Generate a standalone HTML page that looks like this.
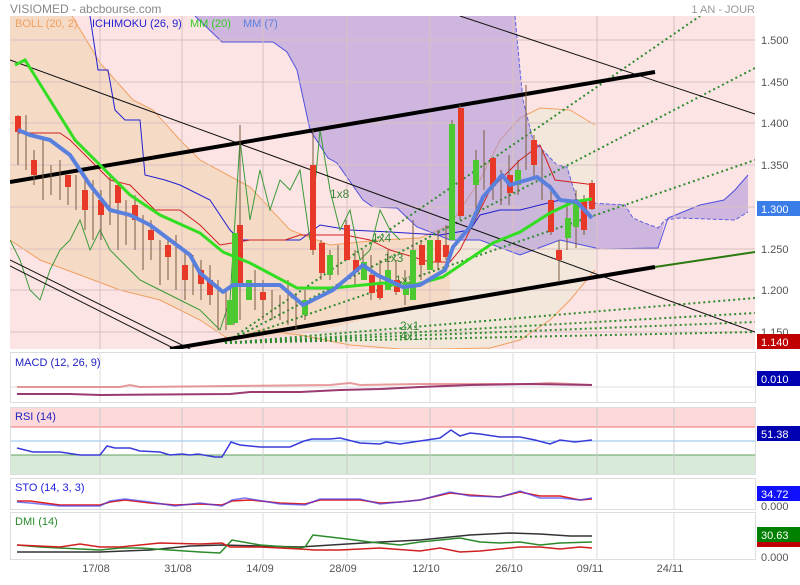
<!DOCTYPE html>
<html><head><meta charset="utf-8"><style>
body{margin:0;width:800px;height:580px;background:#fff;overflow:hidden;font-family:"Liberation Sans",sans-serif}
svg text{font-family:"Liberation Sans",sans-serif}
</style></head><body>
<svg width="800" height="580" xmlns="http://www.w3.org/2000/svg">
<defs><clipPath id="c"><rect x="10" y="16" width="745" height="333"/></clipPath></defs>
<text x="10" y="13" font-size="12" fill="#888">VISIOMED - abcbourse.com</text>
<text x="755" y="13" font-size="11" fill="#999" text-anchor="end">1 AN - JOUR</text>
<g clip-path="url(#c)">
<rect x="10" y="16" width="745" height="333" fill="#fde4e4"/>
<!-- bollinger -->
<polygon points="10,16 72,16 100,63 133,100 153,110 180,140 200,160 250,187 290,230 330,245 380,240 420,238 450,225 480,180 500,140 520,118 540,108 570,110 595,125 595,270 570,300 550,320 520,340 490,348 440,349 400,349 350,345 300,335 260,330 230,340 200,320 160,300 120,290 80,275 40,260 10,240" fill="#f3e7dc"/>
<polygon points="10,16 72,16 100,63 133,100 153,110 180,140 200,160 250,187 290,230 330,245 380,240 420,238 450,225 450,300 300,335 230,340 200,320 160,300 120,290 80,275 40,260 10,240" fill="#f7d2b8" opacity="0.6"/>
<polyline points="72,16 100,63 133,100 153,110 180,140 200,160 250,187 290,230 330,245 380,240 420,238 450,225 480,180 500,140 520,118 540,108 570,110 595,125" fill="none" stroke="#f0a060" stroke-width="1"/>
<polyline points="10,240 40,260 80,275 120,290 160,300 200,320 230,340 260,330 300,335 350,345 400,349 440,349 490,348 520,340 550,320 570,300 595,270" fill="none" stroke="#f0a060" stroke-width="1"/>
<!-- ichimoku cloud -->
<polygon points="195,16 515,16 520,70 523,100 533,140 557,165 567,167 577,200 592,203 625,205 633,218 642,222 658,228 668,218 700,205 724,200 735,190 748,175 748,212 735,220 680,218 665,220 658,248 600,249 560,240 520,255 480,240 450,240 433,233 417,227 397,208 373,207 363,200 337,163 328,158 310,130 297,70 287,52 273,42 222,42" fill="#a890d8" opacity="0.55"/>
<polyline points="195,16 222,42 273,42 287,52 297,70 310,130 328,158 337,163 363,200 373,207 397,208 417,227 433,233 450,240 480,240 520,255 560,240 600,249 658,248 668,218 700,205 724,200 735,190 748,175" fill="none" stroke="#5050e0" stroke-width="1"/>
<polyline points="515,16 520,70 523,100 533,140 557,165 567,167 577,200 592,203 625,205 633,218 642,222 658,228 665,220 680,218 735,220 748,212" fill="none" stroke="#6060e0" stroke-width="1" stroke-dasharray="4,2"/>
<!-- grid -->
<g stroke="#d9c0c0" stroke-width="1">
<line x1="100" y1="16" x2="100" y2="349"/><line x1="182" y1="16" x2="182" y2="349"/><line x1="263" y1="16" x2="263" y2="349"/><line x1="347" y1="16" x2="347" y2="349"/><line x1="430" y1="16" x2="430" y2="349"/><line x1="513" y1="16" x2="513" y2="349"/><line x1="597" y1="16" x2="597" y2="349"/><line x1="674" y1="16" x2="674" y2="349"/>
<line x1="10" y1="40" x2="755" y2="40"/><line x1="10" y1="82" x2="755" y2="82"/><line x1="10" y1="123" x2="755" y2="123"/><line x1="10" y1="165" x2="755" y2="165"/><line x1="10" y1="207" x2="755" y2="207"/><line x1="10" y1="249" x2="755" y2="249"/><line x1="10" y1="290" x2="755" y2="290"/><line x1="10" y1="332" x2="755" y2="332"/>
</g>
<!-- ichimoku tenkan / kijun -->
<polyline points="90,16 98,70 108,70 115,110 125,120 140,120 145,175 165,180 180,185 210,200 230,230 240,240 270,240 300,240 320,225 350,230 390,232 440,235 470,230 480,215 500,210 520,210 560,200 595,200" fill="none" stroke="#2020d0" stroke-width="1"/>
<polyline points="18,133 60,133 70,140 90,160 110,180 130,185 155,210 180,210 200,225 220,245 250,240 285,240 300,235 345,235 370,240 390,250 430,262 450,262 460,250 475,220 490,190 505,175 520,160 540,145 555,180 595,185" fill="none" stroke="#d02020" stroke-width="1"/>
<!-- chikou -->
<polyline points="10,240 20,260 30,290 40,300 50,270 60,250 70,240 80,220 90,250 100,230 110,250 120,260 140,280 160,290 180,300 200,310 220,330 230,300 240,140 250,220 260,170 270,210 280,180 290,190 300,170 310,240 320,130 330,190 340,230 350,210 360,260 370,250 380,210 390,230 400,240" fill="none" stroke="#3a9a3a" stroke-width="1"/>
<!-- fan lines -->
<g stroke="#2e8b2e" stroke-width="2" stroke-dasharray="2,3" fill="none">
<line x1="225" y1="343" x2="700" y2="16"/><line x1="225" y1="343" x2="755" y2="68"/><line x1="225" y1="343" x2="755" y2="160"/><line x1="225" y1="343" x2="755" y2="298"/><line x1="225" y1="343" x2="755" y2="313"/><line x1="225" y1="343" x2="755" y2="322"/><line x1="225" y1="343" x2="755" y2="332"/>
</g>
<g font-size="12" fill="#3a8a3a"><text x="330" y="198">1x8</text><text x="372" y="242">1x4</text><text x="384" y="262">1x3</text><text x="395" y="284">1x2</text><text x="400" y="330">2x1</text><text x="400" y="340">4x1</text></g>
<!-- black lines -->
<line x1="10" y1="60" x2="755" y2="332" stroke="#111" stroke-width="1"/>
<line x1="460" y1="16" x2="755" y2="114" stroke="#111" stroke-width="1"/>
<line x1="10" y1="260" x2="190" y2="349" stroke="#111" stroke-width="1"/>
<line x1="10" y1="266" x2="175" y2="349" stroke="#111" stroke-width="1"/>
<line x1="10" y1="182" x2="655" y2="72" stroke="#000" stroke-width="4"/>
<line x1="170" y1="349" x2="655" y2="267" stroke="#000" stroke-width="4"/>
<line x1="655" y1="267" x2="755" y2="252" stroke="#2a7a10" stroke-width="2"/>
<!-- candles -->
<g stroke="#7a5a40" stroke-width="1">
<line x1="18" y1="115" x2="18" y2="165"/><line x1="26" y1="115" x2="26" y2="170"/><line x1="34" y1="150" x2="34" y2="185"/><line x1="43" y1="140" x2="43" y2="200"/><line x1="51" y1="165" x2="51" y2="195"/><line x1="60" y1="160" x2="60" y2="200"/><line x1="68" y1="175" x2="68" y2="205"/><line x1="76" y1="175" x2="76" y2="210"/><line x1="85" y1="180" x2="85" y2="230"/><line x1="93" y1="180" x2="93" y2="240"/><line x1="101" y1="190" x2="101" y2="240"/><line x1="110" y1="175" x2="110" y2="225"/><line x1="118" y1="190" x2="118" y2="250"/><line x1="126" y1="200" x2="126" y2="245"/><line x1="135" y1="195" x2="135" y2="250"/><line x1="143" y1="215" x2="143" y2="270"/><line x1="151" y1="220" x2="151" y2="260"/><line x1="160" y1="240" x2="160" y2="285"/><line x1="168" y1="240" x2="168" y2="280"/><line x1="176" y1="235" x2="176" y2="290"/><line x1="185" y1="250" x2="185" y2="300"/><line x1="193" y1="255" x2="193" y2="295"/><line x1="201" y1="260" x2="201" y2="300"/><line x1="210" y1="265" x2="210" y2="305"/><line x1="218" y1="280" x2="218" y2="330"/><line x1="226" y1="290" x2="226" y2="330"/><line x1="234" y1="240" x2="234" y2="325"/><line x1="240" y1="125" x2="240" y2="320"/><line x1="255" y1="270" x2="255" y2="310"/><line x1="263" y1="280" x2="263" y2="320"/><line x1="272" y1="290" x2="272" y2="320"/><line x1="280" y1="295" x2="280" y2="320"/><line x1="288" y1="280" x2="288" y2="325"/><line x1="296" y1="295" x2="296" y2="330"/><line x1="305" y1="290" x2="305" y2="320"/><line x1="313" y1="130" x2="313" y2="255"/><line x1="321" y1="240" x2="321" y2="280"/><line x1="330" y1="250" x2="330" y2="280"/><line x1="338" y1="245" x2="338" y2="275"/><line x1="346" y1="220" x2="346" y2="260"/><line x1="355" y1="250" x2="355" y2="285"/><line x1="363" y1="250" x2="363" y2="280"/><line x1="371" y1="255" x2="371" y2="300"/><line x1="380" y1="260" x2="380" y2="300"/><line x1="388" y1="250" x2="388" y2="290"/><line x1="396" y1="260" x2="396" y2="295"/><line x1="405" y1="270" x2="405" y2="305"/><line x1="413" y1="220" x2="413" y2="300"/><line x1="421" y1="240" x2="421" y2="280"/><line x1="430" y1="240" x2="430" y2="270"/><line x1="438" y1="230" x2="438" y2="270"/><line x1="446" y1="225" x2="446" y2="260"/><line x1="452" y1="120" x2="452" y2="240"/><line x1="460" y1="105" x2="460" y2="220"/><line x1="476" y1="150" x2="476" y2="220"/><line x1="484" y1="130" x2="484" y2="190"/><line x1="493" y1="160" x2="493" y2="200"/><line x1="501" y1="170" x2="501" y2="205"/><line x1="509" y1="155" x2="509" y2="205"/><line x1="518" y1="160" x2="518" y2="195"/><line x1="526" y1="85" x2="526" y2="170"/><line x1="534" y1="135" x2="534" y2="180"/><line x1="542" y1="150" x2="542" y2="200"/><line x1="551" y1="185" x2="551" y2="235"/><line x1="559" y1="240" x2="559" y2="282"/><line x1="567" y1="200" x2="567" y2="250"/><line x1="576" y1="190" x2="576" y2="248"/><line x1="584" y1="195" x2="584" y2="235"/><line x1="592" y1="180" x2="592" y2="210"/>
</g>
<g fill="#e83828">
<rect x="15" y="116" width="6" height="16"/><rect x="31" y="160" width="6" height="15"/><rect x="65" y="175" width="6" height="12"/><rect x="82" y="190" width="6" height="20"/><rect x="98" y="200" width="6" height="15"/><rect x="115" y="185" width="6" height="18"/><rect x="132" y="205" width="6" height="15"/><rect x="148" y="230" width="6" height="10"/><rect x="165" y="245" width="6" height="12"/><rect x="182" y="265" width="6" height="15"/><rect x="198" y="270" width="6" height="14"/><rect x="207" y="280" width="6" height="15"/><rect x="237" y="225" width="6" height="60"/><rect x="260" y="292" width="6" height="8"/><rect x="310" y="165" width="6" height="85"/><rect x="319" y="243" width="6" height="30"/><rect x="344" y="225" width="6" height="35"/><rect x="353" y="260" width="6" height="12"/><rect x="369" y="275" width="6" height="18"/><rect x="377" y="285" width="6" height="13"/><rect x="394" y="280" width="6" height="12"/><rect x="419" y="245" width="6" height="20"/><rect x="435" y="240" width="6" height="22"/><rect x="443" y="245" width="6" height="12"/><rect x="458" y="108" width="6" height="108"/><rect x="490" y="158" width="6" height="28"/><rect x="507" y="175" width="6" height="18"/><rect x="531" y="140" width="6" height="25"/><rect x="548" y="200" width="6" height="32"/><rect x="556" y="250" width="6" height="10"/><rect x="581" y="200" width="6" height="30"/><rect x="589" y="183" width="6" height="26"/>
</g>
<g fill="#4cc830">
<rect x="227" y="300" width="6" height="25"/><rect x="232" y="233" width="6" height="90"/><rect x="246" y="280" width="6" height="20"/><rect x="302" y="300" width="6" height="15"/><rect x="327" y="255" width="6" height="20"/><rect x="361" y="262" width="6" height="18"/><rect x="385" y="270" width="6" height="20"/><rect x="403" y="282" width="6" height="13"/><rect x="410" y="250" width="6" height="50"/><rect x="427" y="240" width="6" height="30"/><rect x="449" y="124" width="6" height="116"/><rect x="473" y="160" width="6" height="25"/><rect x="515" y="170" width="6" height="15"/><rect x="565" y="218" width="6" height="20"/><rect x="573" y="200" width="6" height="27"/>
</g>
<!-- MAs -->
<polyline points="15,65 25,60 50,100 75,140 100,165 130,195 160,215 200,233 223,252 250,263 297,288 333,288 383,283 407,287 443,277 493,243 520,232 550,213 573,202 592,199" fill="none" stroke="#33dd22" stroke-width="3"/>
<polyline points="18,130 30,135 50,140 70,155 90,185 110,210 130,215 150,225 170,240 190,255 200,273 223,292 233,285 280,285 303,305 333,290 363,265 377,275 403,287 420,285 445,270 453,247 470,227 483,197 502,175 510,185 520,182 537,177 550,187 560,200 577,202 592,218" fill="none" stroke="#5a80dd" stroke-width="4" stroke-linejoin="round"/>
</g>
<g font-size="11"><text x="15" y="27" fill="#f0a060">BOLL (20, 2)</text><text x="92" y="27" fill="#2020d0">ICHIMOKU (26, 9)</text><text x="190" y="27" fill="#33cc22">MM (20)</text><text x="243" y="27" fill="#5a80dd">MM (7)</text></g>
<g font-size="11" fill="#555"><text x="761" y="44">1.500</text><text x="761" y="86">1.450</text><text x="761" y="127">1.400</text><text x="761" y="169">1.350</text><text x="761" y="253">1.250</text><text x="761" y="294">1.200</text><text x="761" y="336">1.150</text></g>
<rect x="757" y="201" width="43" height="15" fill="#3b7de8"/><text x="761" y="213" font-size="11" fill="#fff">1.300</text>
<rect x="757" y="334" width="43" height="15" fill="#c00000"/><text x="761" y="346" font-size="11" fill="#fff">1.140</text>
<!-- MACD -->
<rect x="10.5" y="352.5" width="745" height="50" fill="#fff" stroke="#ddd"/>
<line x1="10" y1="387" x2="755" y2="387" stroke="#ddd"/>
<g stroke="#ddd"><line x1="100" y1="352" x2="100" y2="403"/><line x1="182" y1="352" x2="182" y2="403"/><line x1="263" y1="352" x2="263" y2="403"/><line x1="347" y1="352" x2="347" y2="403"/><line x1="430" y1="352" x2="430" y2="403"/><line x1="513" y1="352" x2="513" y2="403"/><line x1="597" y1="352" x2="597" y2="403"/><line x1="674" y1="352" x2="674" y2="403"/></g>
<polyline points="17,387 120,387 130,385 140,387 230,386 330,385 350,383 360,385 420,384 470,384 530,384 550,383 592,385" fill="none" stroke="#e07070" stroke-width="2" opacity="0.7"/>
<polyline points="17,394 70,394 100,395 230,394 250,392 300,392 340,390 380,389 420,387 470,385 530,384 592,385" fill="none" stroke="#9a3a70" stroke-width="2"/>
<text x="15" y="366" font-size="11" fill="#2020c0">MACD (12, 26, 9)</text>
<rect x="757" y="371" width="43" height="15" fill="#0000b0"/><text x="761" y="383" font-size="11" fill="#fff">0.010</text>
<!-- RSI -->
<rect x="10.5" y="407.5" width="745" height="67" fill="#fff" stroke="#ddd"/>
<rect x="11" y="408" width="744" height="19" fill="#fdd9d9"/>
<rect x="11" y="455" width="744" height="19" fill="#d8ead8"/>
<line x1="11" y1="427" x2="755" y2="427" stroke="#f07070"/>
<line x1="11" y1="441" x2="755" y2="441" stroke="#8cc0f0"/>
<line x1="11" y1="455" x2="755" y2="455" stroke="#60a060"/>
<g stroke="#ccc"><line x1="100" y1="408" x2="100" y2="474"/><line x1="182" y1="408" x2="182" y2="474"/><line x1="263" y1="408" x2="263" y2="474"/><line x1="347" y1="408" x2="347" y2="474"/><line x1="430" y1="408" x2="430" y2="474"/><line x1="513" y1="408" x2="513" y2="474"/><line x1="597" y1="408" x2="597" y2="474"/><line x1="674" y1="408" x2="674" y2="474"/></g>
<polyline points="17,448 33,452 60,452 80,455 100,455 107,446 115,448 130,448 140,451 160,452 170,455 182,454 190,455 198,454 215,457 222,457 231,442 240,445 260,447 290,447 304,441 312,439 330,439 340,438 360,443 380,444 386,442 400,444 420,441 440,438 451,430 460,436 470,433 480,434 500,437 520,437 535,440 550,444 560,440 575,442 592,440" fill="none" stroke="#3a3ad8" stroke-width="1.5"/>
<text x="15" y="420" font-size="11" fill="#2020c0">RSI (14)</text>
<rect x="757" y="426" width="43" height="15" fill="#0000b0"/><text x="761" y="438" font-size="11" fill="#fff">51.38</text>
<!-- STO -->
<rect x="10.5" y="478.5" width="745" height="31" fill="#fff" stroke="#ddd"/>
<g stroke="#ddd"><line x1="100" y1="479" x2="100" y2="509"/><line x1="182" y1="479" x2="182" y2="509"/><line x1="263" y1="479" x2="263" y2="509"/><line x1="347" y1="479" x2="347" y2="509"/><line x1="430" y1="479" x2="430" y2="509"/><line x1="513" y1="479" x2="513" y2="509"/><line x1="597" y1="479" x2="597" y2="509"/><line x1="674" y1="479" x2="674" y2="509"/></g>
<polyline points="17,501 30,501 60,505 100,505 110,502 125,500 150,503 175,505 200,504 222,505 232,501 250,500 280,503 305,504 320,500 340,500 360,500 380,503 400,502 420,500 450,493 470,495 500,497 520,492 540,496 560,496 580,500 592,499" fill="none" stroke="#e02020" stroke-width="1.5"/>
<polyline points="17,502 30,503 60,506 100,506 110,501 125,499 150,502 175,506 200,503 222,506 232,500 245,498 280,504 305,505 320,499 340,499 360,499 380,504 400,502 420,500 450,492 470,496 500,497 520,491 540,498 560,498 580,500 592,498" fill="none" stroke="#4040f0" stroke-width="1.5" opacity="0.7"/>
<text x="15" y="491" font-size="11" fill="#2020e0">STO (14, 3, 3)</text>
<rect x="757" y="486" width="43" height="15" fill="#1010ff"/><text x="761" y="498" font-size="11" fill="#fff">34.72</text>
<text x="761" y="510" font-size="11" fill="#555">0.000</text>
<!-- DMI -->
<rect x="10.5" y="512.5" width="745" height="47" fill="#fff" stroke="#ddd"/>
<g stroke="#ddd"><line x1="100" y1="513" x2="100" y2="559"/><line x1="182" y1="513" x2="182" y2="559"/><line x1="263" y1="513" x2="263" y2="559"/><line x1="347" y1="513" x2="347" y2="559"/><line x1="430" y1="513" x2="430" y2="559"/><line x1="513" y1="513" x2="513" y2="559"/><line x1="597" y1="513" x2="597" y2="559"/><line x1="674" y1="513" x2="674" y2="559"/></g>
<polyline points="17,552 40,552 100,552 150,550 190,546 222,545 260,546 300,547 347,544 380,542 420,540 470,535 510,533 540,534 570,536 592,536" fill="none" stroke="#333" stroke-width="1.5"/>
<polyline points="17,545 40,547 100,550 120,548 140,548 200,552 220,553 232,540 260,545 300,548 305,547 313,535 330,537 347,539 370,542 400,545 420,542 440,540 460,538 480,542 500,543 520,542 540,545 560,543 592,542" fill="none" stroke="#2a8a2a" stroke-width="1.5"/>
<polyline points="17,545 60,547 80,544 100,547 120,547 140,545 160,543 200,544 222,543 230,547 260,547 300,549 315,550 340,550 380,548 420,551 440,548 460,552 480,551 500,549 520,547 540,547 560,549 580,547 592,548" fill="none" stroke="#d02020" stroke-width="1.5"/>
<text x="15" y="525" font-size="11" fill="#2a8a2a">DMI (14)</text>
<rect x="757" y="527" width="43" height="15" fill="#008000"/><text x="761" y="539" font-size="11" fill="#fff">30.63</text>
<rect x="757" y="542" width="43" height="5" fill="#c00000"/>
<text x="761" y="561" font-size="11" fill="#555">0.000</text>
<g font-size="11" fill="#555" text-anchor="middle"><text x="96" y="572">17/08</text><text x="178" y="572">31/08</text><text x="260" y="572">14/09</text><text x="343" y="572">28/09</text><text x="426" y="572">12/10</text><text x="509" y="572">26/10</text><text x="590" y="572">09/11</text><text x="670" y="572">24/11</text></g>
</svg>
</body></html>
